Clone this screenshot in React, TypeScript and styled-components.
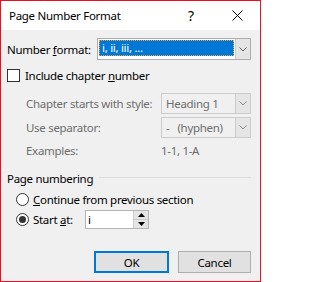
import React from "react";
import styled, { createGlobalStyle } from "styled-components";

const Global = createGlobalStyle`
  html, body { margin: 0; padding: 0; background: #ffffff; }
  * { box-sizing: border-box; }
`;

const FONT = `"Segoe UI", "Noto Sans", "Open Sans", sans-serif`;

const Window = styled.div`
  width: 261px;
  height: 282px;
  border: 1px solid #e81123;
  background: #f0f0f0;
  font-family: ${FONT};
  font-size: 11.5px;
  letter-spacing: -0.3px;
  color: #000;
  display: flex;
  flex-direction: column;
  overflow: hidden;
`;

const TitleBar = styled.div`
  height: 29px;
  flex: none;
  background: #ffffff;
  display: flex;
  align-items: center;
  padding-left: 8px;
`;

const TitleText = styled.div`
  flex: 1;
  font-size: 11.5px;
  white-space: nowrap;
`;

const TitleButton = styled.div<{ $w: number }>`
  width: ${(p) => p.$w}px;
  height: 29px;
  display: flex;
  align-items: center;
  justify-content: center;
  font-size: 14px;
`;

const Body = styled.div`
  flex: 1;
  display: flex;
  flex-direction: column;
  padding: 0 9px 0 6px;
`;

const Row = styled.div<{ $mt: number; $h: number; $indent?: number }>`
  display: flex;
  align-items: center;
  margin-top: ${(p) => p.$mt}px;
  height: ${(p) => p.$h}px;
  padding-left: ${(p) => p.$indent ?? 0}px;
  white-space: nowrap;
`;

const Label = styled.div<{ $w?: number; $disabled?: boolean }>`
  width: ${(p) => (p.$w ? `${p.$w}px` : "auto")};
  flex: none;
  color: ${(p) => (p.$disabled ? "#6d6d6d" : "#000")};
`;

const Combo = styled.div<{ $w: number; $disabled?: boolean }>`
  width: ${(p) => p.$w}px;
  height: 100%;
  display: flex;
  border: 1px solid ${(p) => (p.$disabled ? "#cccccc" : "#adadad")};
  background: ${(p) => (p.$disabled ? "#f0f0f0" : "#ffffff")};
  color: ${(p) => (p.$disabled ? "#6d6d6d" : "#000")};
`;

const ComboText = styled.div`
  flex: 1;
  display: flex;
  align-items: center;
  padding-left: 4px;
`;

const Selection = styled.div`
  flex: 1;
  margin: 1px 1px 3px 1px;
  background: #0078d7;
  color: #ffffff;
  border: 1px dotted #ffa033;
  display: flex;
  align-items: center;
  padding-left: 2px;
  line-height: 1;
`;

const DropButton = styled.div`
  width: 15px;
  flex: none;
  background: #e5e5e5;
  border-left: 1px solid #cccccc;
  display: flex;
  align-items: center;
  justify-content: center;
`;

const Checkbox = styled.div`
  width: 13px;
  height: 13px;
  border: 1px solid #333333;
  background: #ffffff;
  flex: none;
  margin-right: 5px;
`;

const GroupHeader = styled.div`
  display: flex;
  align-items: center;
  margin-top: 12px;
  height: 16px;
  white-space: nowrap;
`;

const GroupLine = styled.div`
  flex: 1;
  height: 1px;
  background: #dcdcdc;
  margin-left: 6px;
  margin-top: -2px;
`;

const Radio = styled.div<{ $checked?: boolean }>`
  width: 13px;
  height: 13px;
  border-radius: 50%;
  border: 1px solid #333333;
  background: #ffffff;
  flex: none;
  margin-right: 4px;
  display: flex;
  align-items: center;
  justify-content: center;
  &::after {
    content: "";
    width: 7px;
    height: 7px;
    border-radius: 50%;
    background: #333333;
    display: ${(p) => (p.$checked ? "block" : "none")};
  }
`;

const Spinner = styled.div`
  width: 64px;
  height: 19px;
  margin-left: 12px;
  border: 1px solid #b4b4b4;
  background: #ffffff;
  display: flex;
`;

const SpinText = styled.div`
  flex: 1;
  display: flex;
  align-items: center;
  padding-left: 2px;
`;

const SpinButtons = styled.div`
  width: 15px;
  display: flex;
  flex-direction: column;
  border-left: 1px solid #cccccc;
`;

const SpinHalf = styled.div`
  flex: 1;
  background: #e5e5e5;
  display: flex;
  align-items: center;
  justify-content: center;
  & + & {
    border-top: 1px solid #cccccc;
  }
`;

const ButtonRow = styled.div`
  margin-top: auto;
  margin-bottom: 8px;
  display: flex;
  justify-content: flex-end;
  gap: 9px;
`;

const Button = styled.div<{ $default?: boolean; $w: number }>`
  width: ${(p) => p.$w}px;
  height: 22px;
  background: #e1e1e1;
  border: ${(p) => (p.$default ? "2px solid #0078d7" : "1px solid #adadad")};
  display: flex;
  align-items: center;
  justify-content: center;
`;

const Chevron = ({ color = "#606060" }: { color?: string }) => (
  <svg width="8" height="5" viewBox="0 0 8 5">
    <polyline points="0.5,0.5 4,4 7.5,0.5" fill="none" stroke={color} strokeWidth="1" />
  </svg>
);

const Triangle = ({ up }: { up?: boolean }) => (
  <svg width="7" height="4" viewBox="0 0 7 4">
    <polygon points={up ? "0,4 7,4 3.5,0" : "0,0 7,0 3.5,4"} fill="#000" />
  </svg>
);

export default function App() {
  return (
    <>
      <Global />
      <Window>
        <TitleBar>
          <TitleText>Page Number Format</TitleText>
          <TitleButton $w={46}>?</TitleButton>
          <TitleButton $w={46}>
            <svg width="11" height="11" viewBox="0 0 11 11">
              <line x1="0.5" y1="0.5" x2="10.5" y2="10.5" stroke="#000" strokeWidth="1" />
              <line x1="10.5" y1="0.5" x2="0.5" y2="10.5" stroke="#000" strokeWidth="1" />
            </svg>
          </TitleButton>
        </TitleBar>
        <Body>
          <Row $mt={8} $h={22}>
            <Label $w={90}>
              Number <u>f</u>ormat:
            </Label>
            <Combo $w={154}>
              <Selection>i, ii, iii, ...</Selection>
              <DropButton>
                <Chevron />
              </DropButton>
            </Combo>
          </Row>
          <Row $mt={9} $h={13}>
            <Checkbox />
            <Label>
              Include chapter <u>n</u>umber
            </Label>
          </Row>
          <Row $mt={11} $h={21} $indent={19}>
            <Label $w={135} $disabled>
              Chapter starts with style:
            </Label>
            <Combo $w={90} $disabled>
              <ComboText>Heading 1</ComboText>
              <DropButton>
                <Chevron color="#8a8a8a" />
              </DropButton>
            </Combo>
          </Row>
          <Row $mt={3} $h={21} $indent={19}>
            <Label $w={135} $disabled>
              Use separator:
            </Label>
            <Combo $w={90} $disabled>
              <ComboText>-&nbsp;&nbsp;&nbsp;(hyphen)</ComboText>
              <DropButton>
                <Chevron color="#8a8a8a" />
              </DropButton>
            </Combo>
          </Row>
          <Row $mt={4} $h={16} $indent={19}>
            <Label $w={135} $disabled>
              Examples:
            </Label>
            <Label $disabled>1-1, 1-A</Label>
          </Row>
          <GroupHeader>
            <Label>Page numbering</Label>
            <GroupLine />
          </GroupHeader>
          <Row $mt={7} $h={13} $indent={9}>
            <Radio />
            <Label>
              <u>C</u>ontinue from previous section
            </Label>
          </Row>
          <Row $mt={4} $h={19} $indent={9}>
            <Radio $checked />
            <Label $w={40}>
              Start <u>a</u>t:
            </Label>
            <Spinner>
              <SpinText>i</SpinText>
              <SpinButtons>
                <SpinHalf>
                  <Triangle up />
                </SpinHalf>
                <SpinHalf>
                  <Triangle />
                </SpinHalf>
              </SpinButtons>
            </Spinner>
          </Row>
          <ButtonRow>
            <Button $default $w={75}>
              OK
            </Button>
            <Button $w={73}>Cancel</Button>
          </ButtonRow>
        </Body>
      </Window>
    </>
  );
}
